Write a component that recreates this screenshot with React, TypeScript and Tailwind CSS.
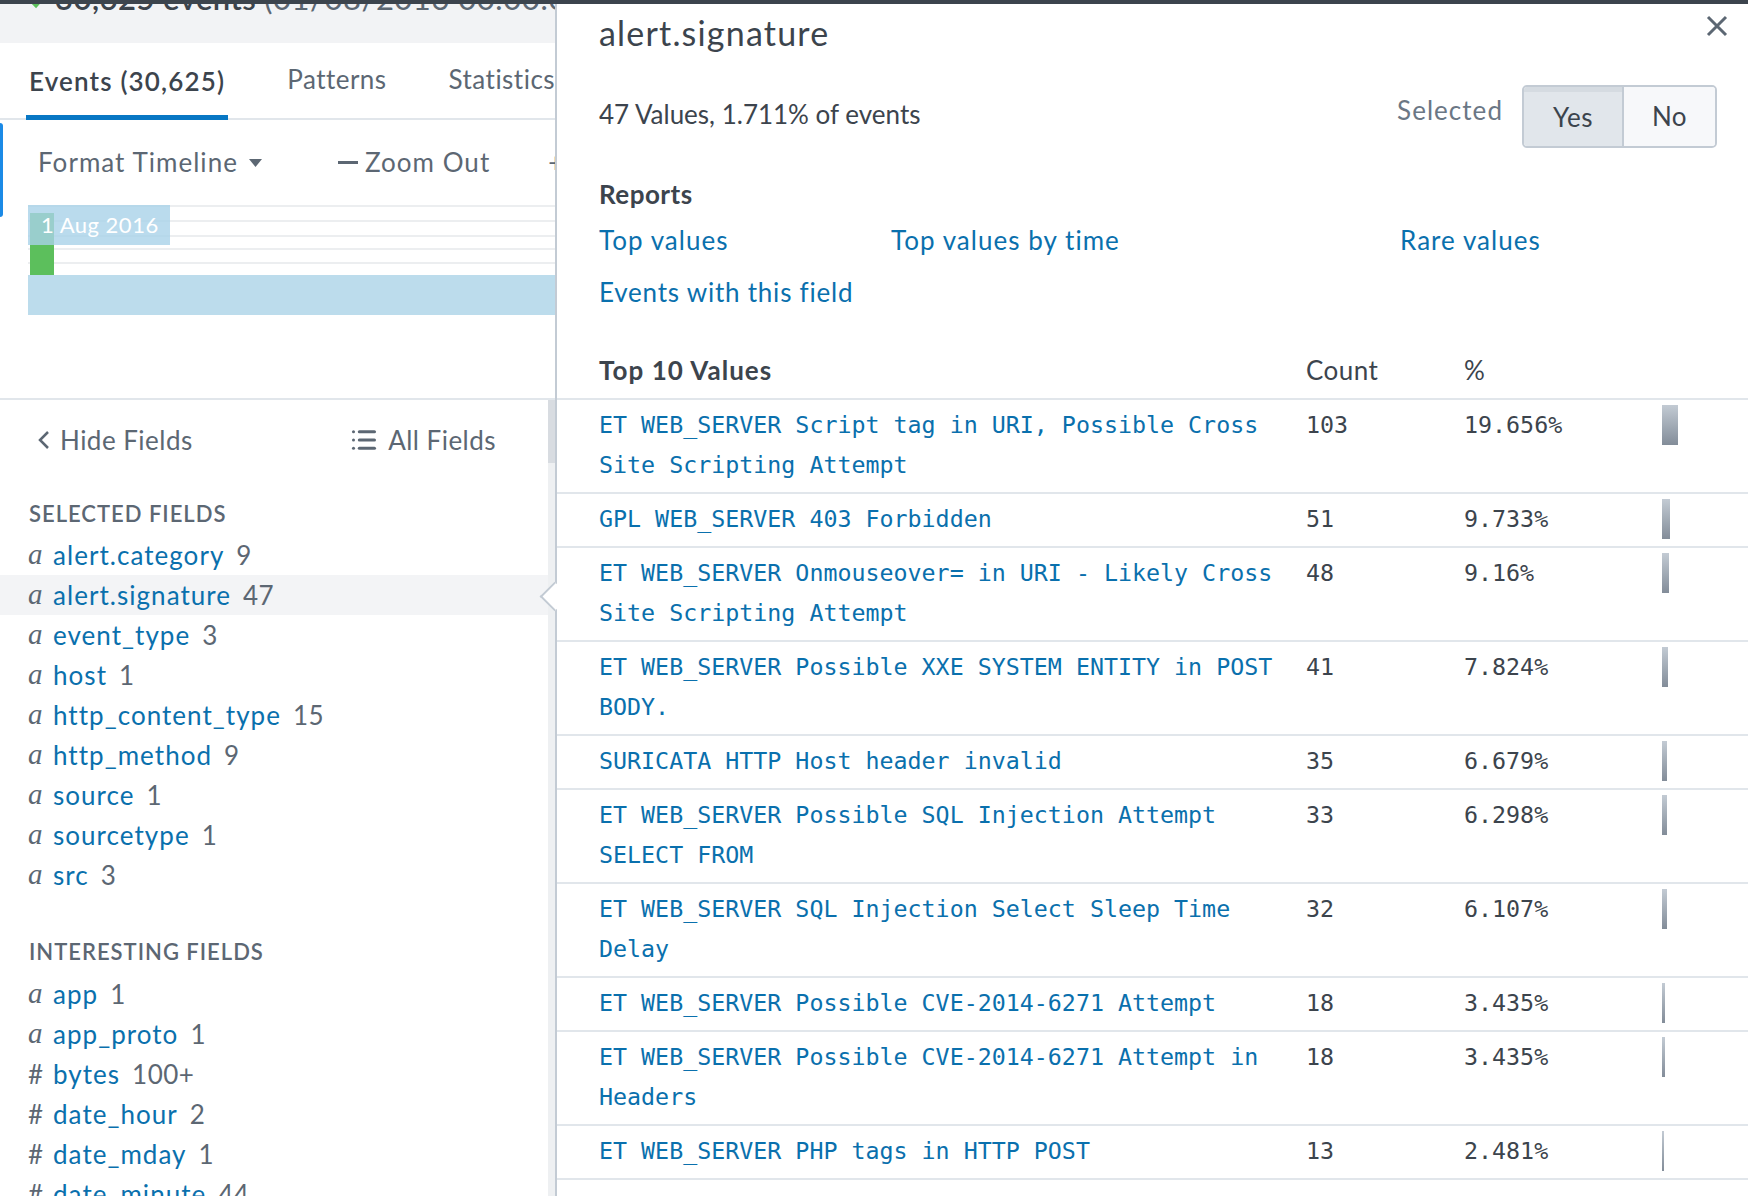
import { List } from "lucide-react";

type Row = { value: string; count: number; pct: string };

const topValues: Row[] = [
  { value: "ET WEB_SERVER Script tag in URI, Possible Cross Site Scripting Attempt", count: 103, pct: "19.656%" },
  { value: "GPL WEB_SERVER 403 Forbidden", count: 51, pct: "9.733%" },
  { value: "ET WEB_SERVER Onmouseover= in URI - Likely Cross Site Scripting Attempt", count: 48, pct: "9.16%" },
  { value: "ET WEB_SERVER Possible XXE SYSTEM ENTITY in POST BODY.", count: 41, pct: "7.824%" },
  { value: "SURICATA HTTP Host header invalid", count: 35, pct: "6.679%" },
  { value: "ET WEB_SERVER Possible SQL Injection Attempt SELECT FROM", count: 33, pct: "6.298%" },
  { value: "ET WEB_SERVER SQL Injection Select Sleep Time Delay", count: 32, pct: "6.107%" },
  { value: "ET WEB_SERVER Possible CVE-2014-6271 Attempt", count: 18, pct: "3.435%" },
  { value: "ET WEB_SERVER Possible CVE-2014-6271 Attempt in Headers", count: 18, pct: "3.435%" },
  { value: "ET WEB_SERVER PHP tags in HTTP POST", count: 13, pct: "2.481%" },
];

const selectedFields = [
  ["alert.category", "9"],
  ["alert.signature", "47"],
  ["event_type", "3"],
  ["host", "1"],
  ["http_content_type", "15"],
  ["http_method", "9"],
  ["source", "1"],
  ["sourcetype", "1"],
  ["src", "3"],
];

const interestingFields = [
  ["a", "app", "1"],
  ["a", "app_proto", "1"],
  ["#", "bytes", "100+"],
  ["#", "date_hour", "2"],
  ["#", "date_mday", "1"],
  ["#", "date_minute", "44"],
];

function FieldRow({ type, name, count, active }: { type: string; name: string; count: string; active?: boolean }) {
  return (
    <div className={`flex h-[40px] shrink-0 items-center whitespace-nowrap pl-[28px] ${active ? "bg-[#f3f4f6]" : ""}`}>
      {type === "a" ? (
        <span className="w-[25px] font-['Liberation_Serif',serif] text-[29px] italic tracking-normal text-[#5c6773]">a</span>
      ) : (
        <span className="w-[25px] text-[26px] text-[#5c6773]">#</span>
      )}
      <span className="text-[26px] tracking-[0.04em] text-[#0a70ad]">{name}</span>
      <span className="ml-[12px] text-[26px] text-[#5c6773]">{count}</span>
    </div>
  );
}

function Timeline() {
  return (
    <svg width="527" height="110" className="block">
      {[0, 15, 30, 43, 57, 70].map((y) => (
        <rect key={y} x="0" y={y} width="527" height="2" fill="#eceef0" />
      ))}
      <rect x="2" y="8" width="24" height="62" fill="#5cbf5c" />
      <rect x="0" y="0" width="142" height="40" fill="#a9d2e8" fillOpacity="0.8" />
      <rect x="0" y="70" width="527" height="40" fill="#bcdcec" />
      <text x="13" y="28" fontSize="22" fill="#ffffff" fontFamily="Lato, sans-serif" letterSpacing="0.5">
        1 Aug 2016
      </text>
    </svg>
  );
}

export default function App() {
  return (
    <div className="h-[1196px] w-[1748px] overflow-hidden bg-white font-['Lato','Noto_Sans',sans-serif] tracking-[0.03em]">
      <div className="h-[4px] bg-[#3c444d]" />
      <div className="flex h-[1192px]">
        {/* Left: search results + field sidebar */}
        <div className="flex w-[555px] shrink-0 flex-col overflow-hidden">
          <div className="h-[39px] shrink-0 overflow-hidden whitespace-nowrap bg-[#f2f3f5]">
            <div className="-mt-[24px] flex items-center pl-[30px] text-[31px] leading-[36px]">
              <svg width="16" height="14" viewBox="0 0 16 14" className="mr-[9px] mt-[8px] shrink-0">
                <path d="M2 7l4 4 8-9" stroke="#5cbf5c" strokeWidth="3" fill="none" />
              </svg>
              <span className="font-semibold text-[#3c444d]">30,625 events</span>
              <span className="ml-[8px] text-[#5c6773]">(01/08/2016 00:00:00.000 to 02/08/2016 00:00:00.000)</span>
            </div>
          </div>

          {/* Tabs */}
          <div className="flex h-[77px] shrink-0 items-end gap-[56px] whitespace-nowrap border-b-2 border-[#e1e6eb] pl-[26px]">
            <div className="-mb-[2px] flex h-[72px] shrink-0 items-center border-b-[5px] border-[#0877c4] px-[3px] text-[26px] font-semibold tracking-[0.045em] text-[#3c444d]">
              Events (30,625)
            </div>
            <div className="flex h-[72px] shrink-0 items-center px-[3px] pb-[5px] text-[26px] text-[#5c6773]">Patterns</div>
            <div className="flex h-[72px] shrink-0 items-center px-[3px] pb-[5px] text-[26px] text-[#5c6773]">Statistics</div>
          </div>

          {/* Timeline */}
          <div className="relative h-[280px] shrink-0 border-b-2 border-[#e1e6eb]">
            <div className="absolute left-0 top-[3px] h-[94px] w-[3px] rounded-r bg-[#1b8ae6]" />
            <div className="flex h-[85px] items-center whitespace-nowrap pl-[38px] text-[26px] text-[#5c6773]">
              <span className="shrink-0 tracking-[0.04em]">Format Timeline</span>
              <svg width="13" height="8" viewBox="0 0 13 8" className="ml-[11px] shrink-0">
                <path d="M0 0h13L6.5 8z" fill="#5c6773" />
              </svg>
              <span className="ml-[76px] inline-block h-[3px] w-[20px] shrink-0 bg-[#5c6773]" />
              <span className="ml-[7px] shrink-0 tracking-[0.04em]">Zoom Out</span>
              <span className="ml-[58px] shrink-0">+ Zoom to Selection</span>
            </div>
            <div className="pl-[28px]">
              <Timeline />
            </div>
          </div>

          {/* Fields sidebar */}
          <div className="flex min-h-0 flex-1 overflow-hidden">
            <div className="flex-1">
              <div className="flex h-[80px] items-center justify-between whitespace-nowrap pl-[38px] pr-[52px] text-[26px] text-[#5c6773]">
                <div className="flex items-center">
                  <svg width="12" height="20" viewBox="0 0 12 20" className="mr-[10px] shrink-0">
                    <path d="M10 2L2 10l8 8" stroke="#5c6773" strokeWidth="2.5" fill="none" />
                  </svg>
                  Hide Fields
                </div>
                <div className="flex items-center">
                  <List size={28} strokeWidth={2.6} className="mr-[10px] shrink-0 text-[#5c6773]" />
                  All Fields
                </div>
              </div>
              <div className="mt-[19px] pl-[29px] text-[22px] font-semibold leading-[30px] tracking-[0.045em] text-[#5c6773]">
                SELECTED FIELDS
              </div>
              <div className="mt-[6px]">
                {selectedFields.map(([name, count]) => (
                  <FieldRow key={name} type="a" name={name} count={count} active={name === "alert.signature"} />
                ))}
              </div>
              <div className="mt-[42px] pl-[29px] text-[22px] font-semibold leading-[30px] tracking-[0.045em] text-[#5c6773]">
                INTERESTING FIELDS
              </div>
              <div className="mt-[7px]">
                {interestingFields.map(([t, name, count]) => (
                  <FieldRow key={name} type={t} name={name} count={count} />
                ))}
              </div>
            </div>
            <div className="flex w-[7px] flex-col bg-[#eef0f2]">
              <div className="h-[63px] bg-[#d8dce1]" />
            </div>
          </div>
        </div>

        {/* Right: field summary popover */}
        <div className="relative flex-1 border-l-2 border-[#c3cbd4] text-[#3c444d]">
          <div className="absolute -left-[13px] top-[582px] h-[21px] w-[21px] rotate-45 border-b-2 border-l-2 border-[#c3cbd4] bg-white" />
          <button className="absolute right-[20px] top-[11px]">
            <svg width="22" height="22" viewBox="0 0 22 22">
              <path d="M2 2l18 18M20 2L2 20" stroke="#5c6773" strokeWidth="3" />
            </svg>
          </button>

          <div className="pl-[42px] pr-[31px]">
            <div className="pt-[9px] text-[34px] leading-[40px] tracking-[0.035em]">alert.signature</div>
            <div className="mt-[32px] flex h-[63px] items-center justify-between">
              <div className="-mt-[4px] text-[26px] tracking-normal">47 Values, 1.711% of events</div>
              <div className="flex items-center">
                <span className="-mt-[12px] mr-[19px] text-[26px] tracking-[0.04em] text-[#6b7785]">Selected</span>
                <div className="flex h-[63px] w-[195px] overflow-hidden rounded-[5px] border-2 border-[#c3cbd4] text-[26px]">
                  <div className="flex w-[100px] items-center justify-center border-r-2 border-[#c3cbd4] bg-[#e1e6eb] pt-[2px] shadow-[inset_0_5px_0_#d5dbe1]">
                    Yes
                  </div>
                  <div className="flex flex-1 items-center justify-center bg-[#f7f8fa]">No</div>
                </div>
              </div>
            </div>

            <div className="mt-[30px] text-[26px] font-bold leading-[32px]">Reports</div>
            <div className="mt-[10px] grid grid-cols-[292px_509px_auto] gap-y-[12px] text-[26px] leading-[40px] tracking-[0.04em] text-[#0a70ad]">
              <span>Top values</span>
              <span>Top values by time</span>
              <span>Rare values</span>
              <span className="col-span-3 tracking-[0.03em]">Events with this field</span>
            </div>
          </div>

          <div className="mt-[38px] grid grid-cols-[707px_158px_198px_1fr] border-b-2 border-[#e1e6eb] pb-[8px] pl-[42px] text-[26px] leading-[40px]">
            <span className="font-bold tracking-[0.04em]">Top 10 Values</span>
            <span>Count</span>
            <span>%</span>
            <span />
          </div>

          {topValues.map((r, i) => (
            <div
              key={i}
              className="grid grid-cols-[707px_158px_198px_1fr] border-b-2 border-[#e1e6eb] pb-[7px] pl-[42px] pt-[5px] font-['DejaVu_Sans_Mono',monospace] text-[23.3px] leading-[40px] tracking-normal"
            >
              <span className="pr-[27px] text-[#0a70ad]">{r.value}</span>
              <span>{r.count}</span>
              <span>{r.pct}</span>
              <div>
                <div
                  className="h-[40px] bg-linear-to-b from-[#c3cbd4] to-[#838d99]"
                  style={{ width: Math.max(1, Math.round(parseFloat(r.pct) * 0.814)) }}
                />
              </div>
            </div>
          ))}
        </div>
      </div>
    </div>
  );
}
